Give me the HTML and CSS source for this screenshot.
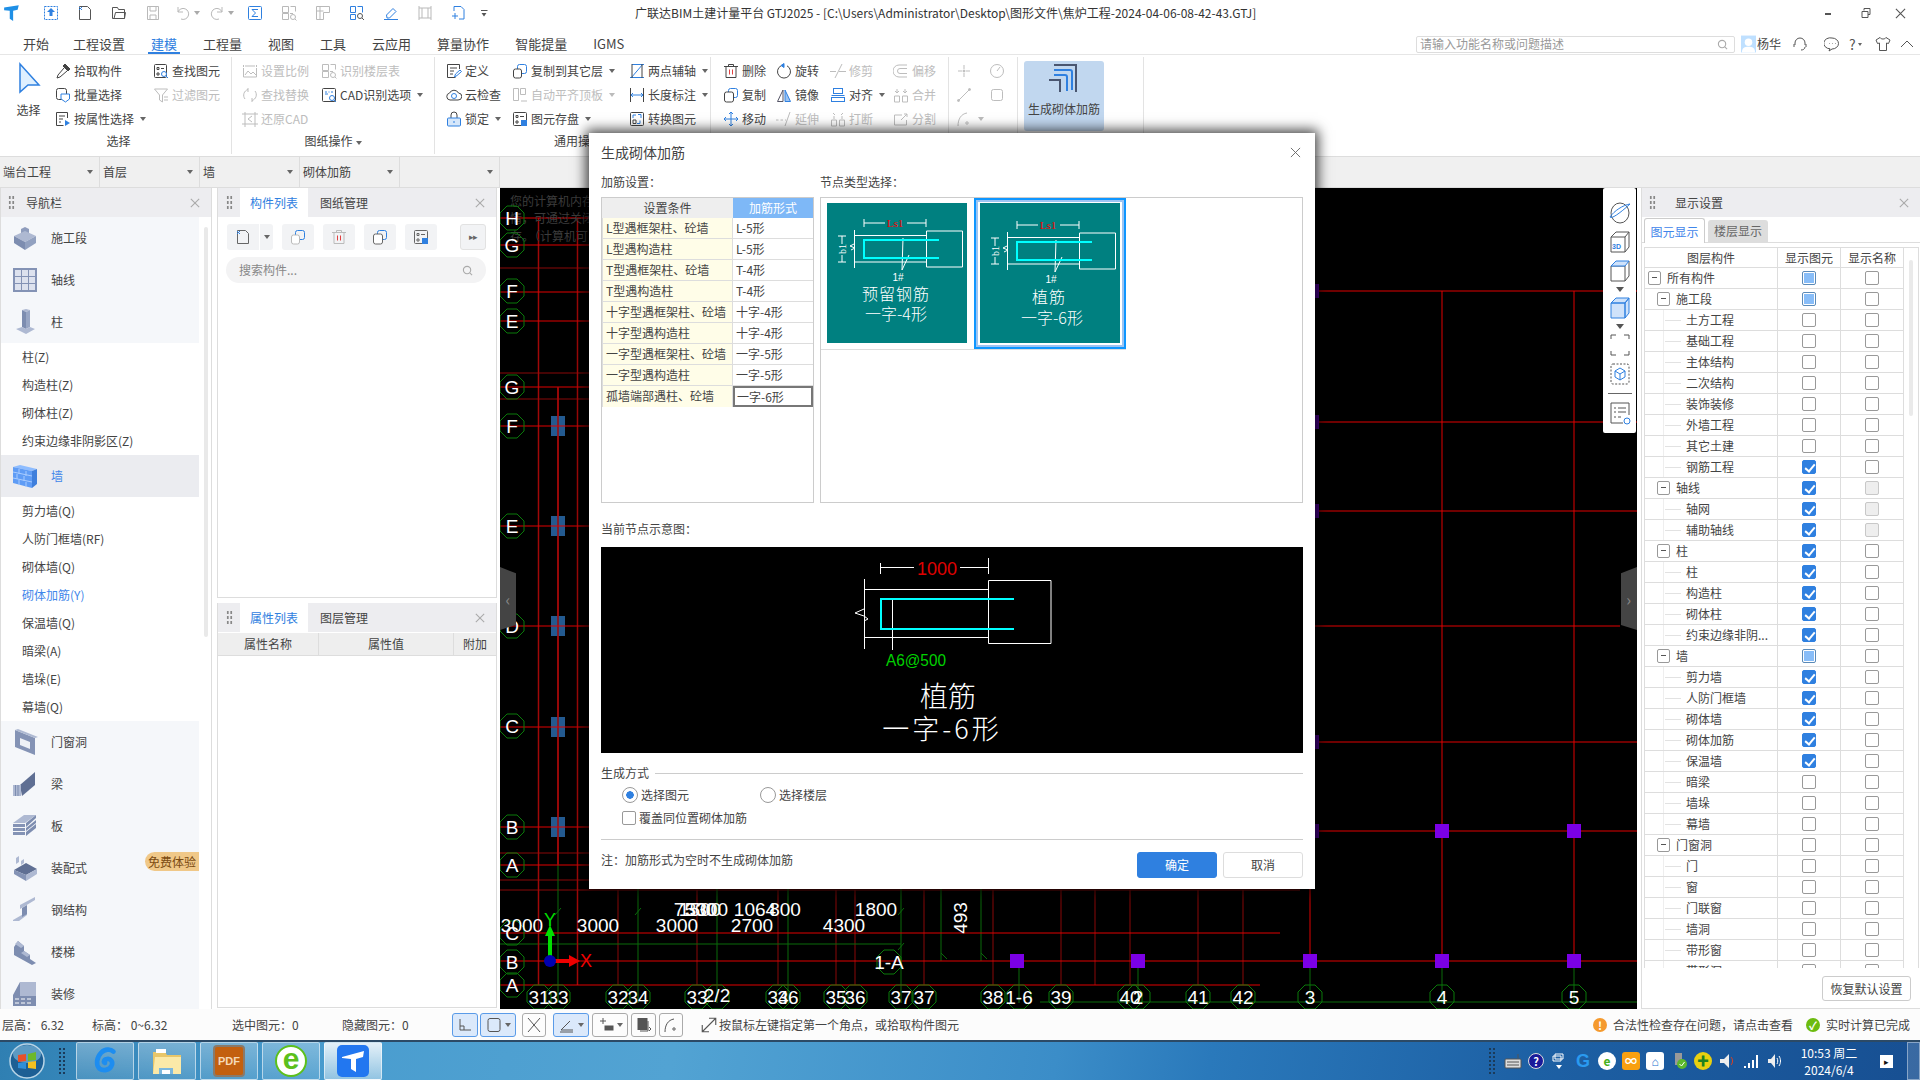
FILE: index.html
```html
<!DOCTYPE html>
<html lang="zh-CN">
<head>
<meta charset="utf-8">
<title>广联达BIM土建计量平台 GTJ2025</title>
<link rel="stylesheet" href="styles.css">
</head>
<body>
<svg class="defs" width="0" height="0">
<defs>
<symbol id="pick" viewBox="0 0 16 16"><path d="M10 1l5 5-2 2-5-5z" fill="#444"/><path d="M9 5l-6 7-1 3 3-1 7-6"/></symbol>
<symbol id="batch" viewBox="0 0 16 16"><rect x="1.5" y="1.5" width="10" height="11" rx="2"/><path stroke="#2f80e0" fill="#fff" d="M6 7h8.500v5l-4 3-4.500-3z"/></symbol>
<symbol id="attr" viewBox="0 0 16 16"><path d="M12.500 7V1.500h-11v13h7M4 5h6M4 8h4M4 11h2"/><path fill="#2f80e0" stroke="none" d="M10 9l5 3-5 3z"/></symbol>
<symbol id="find" viewBox="0 0 16 16"><rect x="1.500" y="1.500" width="12" height="13" rx="1"/><path d="M4 4.500h2v2H4zM8 5.500h3M4 10h2v2H4z"/><circle stroke="#2f80e0" fill="#fff" cx="11" cy="11" r="2.500"/><path stroke="#2f80e0" d="M13 13l2 2"/></symbol>
<symbol id="filter" viewBox="0 0 16 16"><path d="M1.500 2h13l-5 6v7l-3-2V8zM11 10h4M11 13h4"/></symbol>
<symbol id="scale" viewBox="0 0 16 16"><path d="M1.500 5v9h13V5M1.500 2v2M14.500 2v2M3 3h10M3 12l3-4 3 3 2-2 3 3"/></symbol>
<symbol id="floor" viewBox="0 0 16 16"><path d="M1.500 1.500h6v6h-6zM1.500 8.500h6v6h-6zM9 8.500h3M9.500 1.500h5v5"/><circle cx="12" cy="12" r="2.500"/><path d="M14 14l1.500 1.500"/></symbol>
<symbol id="replace" viewBox="0 0 16 16"><path d="M3 12A6 6 0 0 1 6 2.500M13 4a6 6 0 0 1-3 9.500M6 1v4M10 11v4"/></symbol>
<symbol id="cad" viewBox="0 0 16 16"><rect x="1.500" y="1.500" width="13" height="13" rx="1"/><path stroke="#2f80e0" d="M4 5h2M7.500 5h1M10 5h2M4 7h3"/><circle stroke="#2f80e0" fill="#fff" cx="11" cy="11" r="2.500"/><path stroke="#2f80e0" d="M13 13l2 2"/></symbol>
<symbol id="restore" viewBox="0 0 16 16"><path d="M3 1v15M13 1v15M0 3h16M0 13h16M10 5L6 8l4 3"/></symbol>
<symbol id="def" viewBox="0 0 16 16"><path d="M13.500 6V1.500h-12v13h8M4 5h7M4 8h4M4 11h3"/><path stroke="#2f80e0" d="M8.500 14l1-3 4.500-4 1.500 1.500-4.500 4z"/></symbol>
<symbol id="cloud" viewBox="0 0 16 16"><path d="M4 13a3.500 3.500 0 0 1-.5-6.900A5 5 0 0 1 12.500 6 3.500 3.500 0 0 1 12 13z"/><circle stroke="#2f80e0" cx="8" cy="9" r="2.500"/></symbol>
<symbol id="lock" viewBox="0 0 16 16"><path d="M5 7V4a3 3 0 0 1 6 0v3"/><rect stroke="#2f80e0" fill="#d6e7fa" x="1.500" y="7" width="13" height="8" rx="1"/><path stroke="#2f80e0" d="M8 10v2"/></symbol>
<symbol id="copyl" viewBox="0 0 16 16"><rect stroke="#2f80e0" x="5.500" y="1.500" width="9" height="9" rx="2"/><rect fill="#fff" x="1.500" y="6" width="8" height="9" rx="2"/></symbol>
<symbol id="atop" viewBox="0 0 16 16"><path d="M1.500 1.500h5v12h-5zM8.500 1.500h5v6h-5zM9 14h6"/></symbol>
<symbol id="save" viewBox="0 0 16 16"><rect x="1.500" y="1.500" width="13" height="13" rx="1"/><path d="M4 4.500h2v2H4zM8 5.500h4M4 10h2v2H4z"/><rect stroke="none" fill="#2f80e0" x="9" y="9" width="6" height="6"/></symbol>
<symbol id="two" viewBox="0 0 16 16"><path stroke="#2f80e0" d="M1 14.500h14M3 1.500h12M2 15L14 1"/><path d="M3 1v14M13 1v14"/></symbol>
<symbol id="len" viewBox="0 0 16 16"><path d="M1.500 1v14M14.500 1v14"/><path stroke="#2f80e0" d="M2 8h12M4 6L2 8l2 2M12 6l2 2-2 2"/></symbol>
<symbol id="conv" viewBox="0 0 16 16"><rect x="1.500" y="1.500" width="13" height="13" rx="1"/><path d="M4 9h3v3.500H4z"/><path stroke="#2f80e0" d="M9 3.500h3V7M11 9.500v3H8M4 7V4h3"/></symbol>
<symbol id="del" viewBox="0 0 16 16"><path d="M1 3.500h14M5.500 3V1.500h5V3M3 3.500v11h10v-11"/><path stroke="#e04040" d="M6.500 6.500v5M9.500 6.500v5"/></symbol>
<symbol id="rot" viewBox="0 0 16 16"><path d="M5 2.800a6.500 6.500 0 1 0 6 0"/><path fill="#2f80e0" stroke="#2f80e0" d="M8 .5l-3 2 3 2z"/></symbol>
<symbol id="trim" viewBox="0 0 16 16"><path d="M0 8.500h6M9 8.500h7M12 1L5 15"/></symbol>
<symbol id="off" viewBox="0 0 16 16"><path d="M14 2H6a5 5 0 0 0 0 12h8M14 5.500H7a2.500 2.500 0 0 0 0 5h7"/></symbol>
<symbol id="dup" viewBox="0 0 16 16"><rect stroke="#2f80e0" x="5.500" y="1.500" width="9" height="9" rx="2"/><rect fill="#fff" x="1.500" y="5" width="9" height="10" rx="2"/></symbol>
<symbol id="mir" viewBox="0 0 16 16"><path d="M7 3L1.500 14.500H7z" stroke="#556"/><path d="M9 3l5.500 11.500H9z" fill="#9cc4f2" stroke="#2f80e0"/></symbol>
<symbol id="ali" viewBox="0 0 16 16"><path stroke="#2f80e0" d="M1.500 8.500h13"/><rect stroke="#2f80e0" x="3.500" y="1.500" width="9" height="5"/><rect stroke="#2f80e0" x="1.500" y="10.500" width="13" height="4"/></symbol>
<symbol id="mer" viewBox="0 0 16 16"><path d="M1.500 9h5v6h-5zM9.500 9h5v6h-5zM4 2v4M12 2v4M2 4l2 2 2-2M10 4l2 2 2-2"/></symbol>
<symbol id="mov" viewBox="0 0 16 16"><path stroke="#2f80e0" d="M8 1v14M1 8h14M6 3l2-2 2 2M6 13l2 2 2-2M3 6L1 8l2 2M13 6l2 2-2 2"/></symbol>
<symbol id="ext" viewBox="0 0 16 16"><path d="M0 9h2.500M4.500 9H7M9 9h1M14 1L9 15"/></symbol>
<symbol id="brk" viewBox="0 0 16 16"><path d="M1.500 9h5v6h-5zM9.500 9h5v6h-5zM4 5v3M12 5v3M3 2l2 2M13 2l-2 2"/></symbol>
<symbol id="spl" viewBox="0 0 16 16"><path d="M9 4H1.500v10h12V9M8 9l6-6M11 3h3v3"/></symbol>
<symbol id="pt" viewBox="0 0 16 16"><path d="M8 2v4M8 10v4M2 8h4M10 8h4"/><circle fill="currentColor" cx="8" cy="8" r="1"/></symbol>
<symbol id="gauge" viewBox="0 0 16 16"><circle cx="8" cy="8" r="6.500"/><path d="M8 8l3-4"/></symbol>
<symbol id="slash" viewBox="0 0 16 16"><path d="M2 14L14 2"/><circle fill="currentColor" cx="2.500" cy="13.500" r="1"/><circle fill="currentColor" cx="13.500" cy="2.500" r="1"/></symbol>
<symbol id="rr" viewBox="0 0 16 16"><rect x="2.500" y="2.500" width="11" height="11" rx="2"/></symbol>
<symbol id="curve" viewBox="0 0 16 16"><path d="M2 15C2 8 5 3 11 2"/><circle cx="11" cy="12" r="1.200"/></symbol>
<symbol id="xmark" viewBox="0 0 12 12"><path d="M1 1l10 10M11 1L1 11"/></symbol>
<symbol id="mag" viewBox="0 0 12 12"><circle cx="5.500" cy="5.500" r="4"/><path d="M8.500 8.500l2.500 2.500"/></symbol>
<symbol id="cb1" viewBox="0 0 16 16"><path d="M2.500 14.500V1.500h8l3 3v10z"/><path stroke="#2f80e0" d="M2 2l3 3M5 2L2 5"/></symbol>
<polygon id="hx" points="-5,-12 5,-12 12,-5 12,5 5,12 -5,12 -12,5 -12,-5"/>
<symbol id="node" viewBox="0 0 140 140">
<path fill="none" stroke="#fff" d="M37 16v8M99 16v8M37 20h21M80 20h19M27.500 27v38M27.500 32.500H99M27.500 59H99M99.500 28h36v36h-36zM11 33h8M11 59h8M15 33v8M15 52v7M27 41l-4 2 5 2-4 2M76 35l-1 32M82 52l-7 15"/>
<path fill="none" stroke="#00ffff" stroke-width="2" d="M112 37H37v18h75"/>
<text class="ls" x="68" y="24">Ls1</text><text class="b1" transform="translate(19 46) rotate(-90)">b1</text><text class="no" x="71" y="78">1#</text>
</symbol>
</defs>
</svg>

<div class="app">
<header class="titlebar">
<svg class="tlogo" viewBox="0 0 16 16"><path fill="#1e8fe6" d="M1 3l13-2-1 4-4 1v9l-3-2V6l-5-.5z"/></svg>
<span class="ti blue"><svg class="ic" viewBox="0 0 16 16"><path stroke-dasharray="2 1" stroke="#2f80e0" d="M1.500 1.500h13v13h-13z"/><path fill="#2f80e0" stroke="none" d="M8 3l4 4H9.500v4h-3V7H4z"/></svg></span>
<span class="ti"><svg class="ic"><use href="#cb1"/></svg></span>
<span class="ti"><svg class="ic" viewBox="0 0 16 16"><path d="M1.500 13.500v-11h5l1 2h6v9zM3 13.500l1.500-6h10l-1 6"/></svg></span>
<span class="ti off"><svg class="ic" viewBox="0 0 16 16"><path d="M2.500 1.500h11v13h-11zM5 2v4h6V2M5 14v-4h6v4"/></svg></span>
<span class="ti off"><svg class="ic" viewBox="0 0 16 16"><path d="M3 7a5.500 5.500 0 1 1 3 7M3 2v5h5"/></svg><i class="car"></i></span>
<span class="ti off"><svg class="ic" viewBox="0 0 16 16"><path d="M13 7a5.500 5.500 0 1 0-3 7M13 2v5H8"/></svg><i class="car"></i></span>
<span class="ti blue"><svg class="ic" viewBox="0 0 16 16"><rect x="1.500" y="1.500" width="13" height="13" rx="1"/><path d="M11 4.500H5l3.500 3.500L5 11.500h6"/></svg></span>
<span class="ti off"><svg class="ic"><use href="#floor"/></svg></span>
<span class="ti off"><svg class="ic" viewBox="0 0 16 16"><path d="M1.500 1.500h13v6h-6v7h-7zM1.500 6h7M5 1.500v13"/></svg></span>
<span class="ti"><svg class="ic" viewBox="0 0 16 16"><path stroke="#2f80e0" d="M1.500 1.500h5v6h-5zM8.500 1.500h5v6M1.500 9.500h5v5h-5z"/><circle cx="11" cy="11" r="2.500"/><path d="M13 13l2 2"/></svg></span>
<span class="ti blue"><svg class="ic" viewBox="0 0 16 16"><path d="M1 14.500h14M4 13l-.5-3L10 3.500l3 3L6.500 13z"/></svg></span>
<span class="ti off"><svg class="ic" viewBox="0 0 16 16"><path d="M2 1v14M14 1v14M2 3h12M2 13h12M5 3v10M11 3v10"/></svg></span>
<span class="ti blue"><svg class="ic" viewBox="0 0 16 16"><path d="M3 6V1.500h7l3 3V14H8M1 11h6M4 8v6"/></svg></span>
<span class="ti menu-more"><i class="more"></i></span>
<span class="wintitle">广联达BIM土建计量平台 GTJ2025 - [C:\Users\Administrator\Desktop\图形文件\焦炉工程-2024-04-06-08-42-43.GTJ]</span>
<span class="winbtns">
<i class="wmin"></i>
<svg class="wr" viewBox="0 0 10 10"><path d="M3 2.500V.5h6v6H7M1 3.500h6v6H1z"/></svg>
<svg class="wx" viewBox="0 0 12 12"><use href="#xmark"/></svg>
</span>
</header>

<nav class="menubar">
<span class="mi">开始</span><span class="mi">工程设置</span><span class="mi on">建模</span><span class="mi">工程量</span><span class="mi">视图</span><span class="mi">工具</span><span class="mi">云应用</span><span class="mi">算量协作</span><span class="mi">智能提量</span><span class="mi">IGMS</span>
<div class="msearch"><span>请输入功能名称或问题描述</span><svg class="sm" viewBox="0 0 12 12"><use href="#mag"/></svg></div>
<svg class="avatar" viewBox="0 0 16 18"><rect width="16" height="18" fill="#bfe0ff"/><circle cx="8" cy="7" r="4" fill="#fff"/><path d="M1 18c0-5 3-6 7-6s7 1 7 6z" fill="#fff"/></svg>
<span class="uname">杨华</span>
<svg class="hi hs" viewBox="0 0 16 16"><path d="M3 9V7a5 5 0 0 1 10 0v2M2 8v3M14 8v3M13 11c0 2-2 3-4 3"/></svg>
<svg class="hi hc" viewBox="0 0 16 16"><path d="M8 2a6.500 5.500 0 1 0-2 10.800L5 15l3-2a6.500 5.500 0 0 0 0-11zM5 7.500h.5M8 7.500h.5M11 7.500h.5"/></svg>
<span class="hq">?<i class="car"></i></span>
<svg class="hi ht" viewBox="0 0 16 16"><path d="M5 1.500L1 4l1.500 3.500L4.500 7v7.500h7V7l2 .5L15 4l-4-2.500C10 3.500 6 3.500 5 1.500z"/></svg>
<svg class="hi hu" viewBox="0 0 16 16"><path d="M2 11l6-6 6 6"/></svg>
</nav>

<section class="ribbon">
<div class="grp g1"><div class="gb">
 <div class="bigsel"><svg viewBox="0 0 24 32" class="bigarrow"><path d="M3 2l19 21H11l-8 7z" fill="#dff0ff" stroke="#2f80e0" stroke-width="1.500"/></svg><span>选择</span></div>
 <div class="col w98"><div class="it"><svg class="ic"><use href="#pick"/></svg>拾取构件</div><div class="it"><svg class="ic"><use href="#batch"/></svg>批量选择</div><div class="it"><svg class="ic"><use href="#attr"/></svg>按属性选择<i class="car"></i></div></div>
 <div class="col"><div class="it"><svg class="ic"><use href="#find"/></svg>查找图元</div><div class="it off"><svg class="ic"><use href="#filter"/></svg>过滤图元</div></div>
 </div><div class="gl gl1">选择</div></div>
<div class="grp g2"><div class="gb">
 <div class="col w79"><div class="it off"><svg class="ic"><use href="#scale"/></svg>设置比例</div><div class="it off"><svg class="ic"><use href="#replace"/></svg>查找替换</div><div class="it off"><svg class="ic"><use href="#restore"/></svg>还原CAD</div></div>
 <div class="col"><div class="it off"><svg class="ic"><use href="#floor"/></svg>识别楼层表</div><div class="it"><svg class="ic"><use href="#cad"/></svg>CAD识别选项<i class="car"></i></div></div>
 </div><div class="gl gl2">图纸操作<i class="car"></i></div></div>
<div class="grp g3"><div class="gb">
 <div class="col w66"><div class="it"><svg class="ic"><use href="#def"/></svg>定义</div><div class="it"><svg class="ic"><use href="#cloud"/></svg>云检查</div><div class="it"><svg class="ic"><use href="#lock"/></svg>锁定<i class="car"></i></div></div>
 <div class="col w117"><div class="it"><svg class="ic"><use href="#copyl"/></svg>复制到其它层<i class="car"></i></div><div class="it off"><svg class="ic"><use href="#atop"/></svg>自动平齐顶板<i class="car"></i></div><div class="it"><svg class="ic"><use href="#save"/></svg>图元存盘<i class="car"></i></div></div>
 <div class="col"><div class="it"><svg class="ic"><use href="#two"/></svg>两点辅轴<i class="car"></i></div><div class="it"><svg class="ic"><use href="#len"/></svg>长度标注<i class="car"></i></div><div class="it"><svg class="ic"><use href="#conv"/></svg>转换图元</div></div>
 </div><div class="gl">通用操作</div></div>
<div class="grp g4"><div class="gb">
 <div class="col w53"><div class="it"><svg class="ic"><use href="#del"/></svg>删除</div><div class="it"><svg class="ic"><use href="#dup"/></svg>复制</div><div class="it"><svg class="ic"><use href="#mov"/></svg>移动</div></div>
 <div class="col w54"><div class="it"><svg class="ic"><use href="#rot"/></svg>旋转</div><div class="it"><svg class="ic"><use href="#mir"/></svg>镜像</div><div class="it off"><svg class="ic"><use href="#ext"/></svg>延伸</div></div>
 <div class="col w63"><div class="it off"><svg class="ic"><use href="#trim"/></svg>修剪</div><div class="it"><svg class="ic"><use href="#ali"/></svg>对齐<i class="car"></i></div><div class="it off"><svg class="ic"><use href="#brk"/></svg>打断</div></div>
 <div class="col"><div class="it off"><svg class="ic"><use href="#off"/></svg>偏移</div><div class="it off"><svg class="ic"><use href="#mer"/></svg>合并</div><div class="it off"><svg class="ic"><use href="#spl"/></svg>分割</div></div>
 </div></div>
<div class="grp g5"><div class="gb">
 <div class="col w33"><div class="it off"><svg class="ic"><use href="#pt"/></svg></div><div class="it off"><svg class="ic"><use href="#slash"/></svg></div><div class="it off"><svg class="ic"><use href="#curve"/></svg><i class="car"></i></div></div>
 <div class="col"><div class="it off"><svg class="ic"><use href="#gauge"/></svg></div><div class="it off"><svg class="ic"><use href="#rr"/></svg></div></div>
 </div></div>
<div class="grp g6"><div class="genbtn">
 <svg class="genic" viewBox="0 0 32 32"><path d="M6 3h22v27" fill="none" stroke="#4a5670" stroke-width="2"/><path d="M6 8h16a2 2 0 0 1 2 2v18M6 13h11a2 2 0 0 1 2 2v14" fill="none" stroke="#2f80e0" stroke-width="2"/><path d="M1 18h11v12" fill="none" stroke="#4a5670" stroke-width="2"/></svg>
 <span>生成砌体加筋</span></div></div>
</section>

<div class="dropbar">
<span class="dd">端台工程<i class="car"></i></span><span class="dd">首层<i class="car"></i></span><span class="dd">墙<i class="car"></i></span><span class="dd">砌体加筋<i class="car"></i></span><span class="dd"><i class="car"></i></span>
</div>

<main class="main">
<aside class="nav">
 <div class="phead"><i class="grip"></i><span class="ptitle">导航栏</span><svg class="pclose" viewBox="0 0 12 12"><use href="#xmark"/></svg></div>
 <div class="navbody">
  <div class="navlist">
   <div class="nb"><svg class="ni" viewBox="0 0 26 26"><path fill="#8f9dbd" d="M13 2l4 2v4l-4 2-4-2V4z"/><path fill="#aeb9d2" d="M2 11l11-5 11 5-11 6z"/><path fill="#7d8db0" d="M2 11v7l11 7v-8z"/><path fill="#92a1c0" d="M24 11v7l-11 7v-8z"/></svg>施工段</div>
   <div class="nb"><svg class="ni" viewBox="0 0 26 26"><rect x="1" y="1" width="24" height="24" fill="#8493b5"/><path d="M3 3h6v6H3zM10 3h6v6h-6zM17 3h6v6h-6zM3 10h6v6H3zM10 10h6v6h-6zM17 10h6v6h-6zM3 17h6v6H3zM10 17h6v6h-6zM17 17h6v6h-6z" fill="#dde2ee"/></svg>轴线</div>
   <div class="nb"><svg class="ni" viewBox="0 0 26 26"><path fill="#aeb9d2" d="M10 1l4-1 4 1-4 2z"/><path fill="#7d8db0" d="M10 1l4 2v17l-4-2z"/><path fill="#98a6c4" d="M18 1l-4 2v17l4-2z"/><path fill="#aeb9d2" d="M4 20l6-2 4 2 4-2 5 2-9 5z"/></svg>柱</div>
   <div class="ns">柱(Z)</div><div class="ns">构造柱(Z)</div><div class="ns">砌体柱(Z)</div><div class="ns">约束边缘非阴影区(Z)</div>
   <div class="nb cur"><svg class="ni" viewBox="0 0 26 26"><path fill="#8dbcff" d="M1 4l7-2 17 4-5 2z"/><path fill="#5f9cf5" d="M1 4l19 4v17L1 20z"/><path fill="#3f7fdc" d="M25 6v15l-5 4V8z"/><path stroke="#a9ccff" fill="none" d="M1 9l19 4M1 15l19 4M7 6v5M14 8v5M5 11v5M12 13v5M7 17v5M14 19v5"/></svg>墙</div>
   <div class="ns">剪力墙(Q)</div><div class="ns">人防门框墙(RF)</div><div class="ns">砌体墙(Q)</div><div class="ns act">砌体加筋(Y)</div><div class="ns">保温墙(Q)</div><div class="ns">暗梁(A)</div><div class="ns">墙垛(E)</div><div class="ns">幕墙(Q)</div>
   <div class="nb"><svg class="ni" viewBox="0 0 26 26"><path fill="#8493b5" d="M3 1l20 8v17L3 18z"/><path fill="#eef1f6" d="M8 9l10 4v7L8 16z"/><path fill="#aeb9d2" d="M3 1l3-1 20 8-3 1z"/></svg>门窗洞</div>
   <div class="nb"><svg class="ni" viewBox="0 0 26 26"><path fill="#5f6f93" d="M8 14L23 1v13L10 25z"/><path fill="#aeb9d2" d="M1 14h8v11H1z"/><path stroke="#7d8db0" d="M3.500 14v11M6 14v11"/></svg>梁</div>
   <div class="nb"><svg class="ni" viewBox="0 0 26 26"><path fill="#aeb9d2" d="M1 10L12 2h12L13 10z"/><path fill="#8493b5" d="M1 11h12v3H1zM1 15h12v3H1zM1 19h12v3H1z"/><path fill="#7d8db0" d="M14 10L24 2v3L14 14zM14 15l10-8v3l-10 8zM14 19l10-8v4l-10 8z"/></svg>板</div>
   <div class="nb"><svg class="ni" viewBox="0 0 26 26"><path fill="#aeb9d2" d="M4 3l3-2v6L4 9zM9 6l3-2v4L9 10z"/><path fill="#5f6f93" d="M2 15l12-7 11 6-11 6z"/><path fill="#8493b5" d="M2 15v4l12 7v-6z"/><path fill="#aeb9d2" d="M25 14v5l-11 7v-6z"/></svg>装配式</div>
   <div class="nb"><svg class="ni" viewBox="0 0 26 26"><path fill="#aeb9d2" d="M8 8L23 0v3L8 12zM1 23l14-8v3L7 24H1z"/><path fill="#7d8db0" d="M10 11l5-3v9l-5 3z"/></svg>钢结构</div>
   <div class="nb"><svg class="ni" viewBox="0 0 26 26"><path fill="#7d8db0" d="M2 8l4-6 6 5v5l6 4v4l6 4-4 2L2 16z"/><path fill="#aeb9d2" d="M6 2l6 5-3 2-6-4zM12 12l6 4-3 2-6-4z"/></svg>楼梯</div>
   <div class="nb"><svg class="ni" viewBox="0 0 26 26"><path fill="#aeb9d2" d="M8 1h16v14H8z"/><path fill="#7d8db0" d="M1 14l7-13v14H1zM1 15h23v10H1z"/><path stroke="#fff" d="M3 18h4M9 18h4M15 18h4M3 22h4M9 22h4M15 22h4"/></svg>装修</div>
  </div>
  <div class="navscroll"><i></i></div>
  <span class="badge">免费体验</span>
 </div>
</aside>

<div class="midcol">
 <section class="pane pa">
  <div class="phead"><i class="grip"></i><span class="ptab on">构件列表</span><span class="ptab">图纸管理</span><svg class="pclose" viewBox="0 0 12 12"><use href="#xmark"/></svg></div>
  <div class="tools">
   <span class="tb tb1"><svg class="ic"><use href="#cb1"/></svg></span><span class="tb tbc"><i class="car"></i></span>
   <span class="tb mg9 off"><svg class="ic"><use href="#copyl"/></svg></span>
   <span class="tb mg9 off"><svg class="ic"><use href="#del"/></svg></span>
   <span class="tb mg9"><svg class="ic"><use href="#dup"/></svg></span>
   <span class="tb mg9"><svg class="ic"><use href="#save"/></svg></span>
   <span class="tb tbr">▸▸</span>
  </div>
  <div class="psearch"><span>搜索构件...</span><svg class="sm" viewBox="0 0 12 12"><use href="#mag"/></svg></div>
 </section>
 <section class="pane pb">
  <div class="phead"><i class="grip"></i><span class="ptab on">属性列表</span><span class="ptab">图层管理</span><svg class="pclose" viewBox="0 0 12 12"><use href="#xmark"/></svg></div>
  <div class="ptable"><span class="c1">属性名称</span><span class="c2">属性值</span><span class="c3">附加</span></div>
 </section>
</div>

<div class="canvas">
<svg class="cad" viewBox="500 188 1137 821" xmlns="http://www.w3.org/2000/svg">
<g class="dimr">
<path d="M500 268H589M500 373H589M500 399H589M500 853H589M500 880H589M500 890H1300M618 890V985M697 890V985M778 890V985M836 890V985M855 890V985M924 890V985M993 890V985M1061 890V985M1095 890V985M1130 890V985M1198 890V985M1243 890V985"/>
</g>
<g class="grn">
<path d="M558 865V1003M638 889V1003M717 889V1003M788 889V1003M901 889V1003M941 889V961M981 889V961M1019 961V1003M1138 961V1003M500 944H901M1040 1002H1637M1310 961V1003M1442 961V1003M1574 961V1003M555 915l6-7M635 915l6-7M898 915l6-7M898 950l6-7M941 953l6 6M981 953l6 6"/>
</g>
<g class="vred"><path d="M538.500 218V985M558 387V865M577.500 218V985"/></g>
<g class="red">
<path d="M500 218H589M500 245H589M500 292H589M500 321H589M500 387H589M500 426H589M500 526H589M500 626H589M500 727H589M500 827H589M500 865H589M500 933H1280M500 961H1637M500 985H1260"/>
<path d="M1315 291H1637M1315 422H1637M1315 511H1637M1315 626H1620M1315 742H1637M1315 831H1637M1442 291V961M1574 291V961M1310 889V961"/>
</g>
<g fill="#235a90"><rect x="551" y="416" width="14" height="20"/><rect x="551" y="516" width="14" height="20"/><rect x="551" y="616" width="14" height="20"/><rect x="551" y="717" width="14" height="20"/><rect x="551" y="817" width="14" height="20"/></g>
<path class="vred" d="M558 387V865"/>
<path class="lnr" d="M551 426h14M551 526h14M551 626h14M551 727h14M551 827h14"/>
<g fill="#7b00e6"><rect x="1435" y="824" width="14" height="14"/><rect x="1567" y="824" width="14" height="14"/><rect x="1303" y="954" width="14" height="14"/><rect x="1435" y="954" width="14" height="14"/><rect x="1567" y="954" width="14" height="14"/><rect x="1010" y="954" width="14" height="14"/><rect x="1131" y="954" width="14" height="14"/></g>
<g fill="#470088"><rect x="1315" y="284" width="4" height="14"/><rect x="1315" y="415" width="4" height="14"/><rect x="1315" y="504" width="4" height="14"/><rect x="1315" y="735" width="4" height="14"/><rect x="1315" y="824" width="4" height="14"/></g>
<g class="hint"><text x="510" y="206">您的计算机内存</text><text x="510" y="223">情，可通过关闭</text><text x="510" y="241">存。（计算机可</text></g>
<g class="bub">
<use href="#hx" x="512" y="218"/><use href="#hx" x="512" y="245"/><use href="#hx" x="512" y="291"/><use href="#hx" x="512" y="321"/><use href="#hx" x="512" y="387"/><use href="#hx" x="512" y="426"/><use href="#hx" x="512" y="526"/><use href="#hx" x="512" y="626"/><use href="#hx" x="512" y="726"/><use href="#hx" x="512" y="827"/><use href="#hx" x="512" y="865"/><use href="#hx" x="512" y="933"/><use href="#hx" x="512" y="962"/><use href="#hx" x="512" y="985"/>
<use href="#hx" x="539" y="997"/><use href="#hx" x="558" y="997"/><use href="#hx" x="618" y="997"/><use href="#hx" x="638" y="997"/><use href="#hx" x="697" y="997"/><use href="#hx" x="717" y="997"/><use href="#hx" x="778" y="997"/><use href="#hx" x="788" y="997"/><use href="#hx" x="836" y="997"/><use href="#hx" x="855" y="997"/><use href="#hx" x="901" y="997"/><use href="#hx" x="924" y="997"/><use href="#hx" x="993" y="997"/><use href="#hx" x="1019" y="997"/><use href="#hx" x="1061" y="997"/><use href="#hx" x="1130" y="997"/><use href="#hx" x="1138" y="997"/><use href="#hx" x="1198" y="997"/><use href="#hx" x="1243" y="997"/><use href="#hx" x="1310" y="997"/><use href="#hx" x="1442" y="997"/><use href="#hx" x="1574" y="997"/><use href="#hx" x="889" y="962"/>
</g>
<g class="bt">
<text x="512" y="225">H</text><text x="512" y="252">G</text><text x="512" y="298">F</text><text x="512" y="328">E</text><text x="512" y="394">G</text><text x="512" y="433">F</text><text x="512" y="533">E</text><text x="512" y="633">D</text><text x="512" y="733">C</text><text x="512" y="834">B</text><text x="512" y="872">A</text><text x="512" y="940">C</text><text x="512" y="969">B</text><text x="512" y="992">A</text>
<text x="539" y="1004">31</text><text x="558" y="1004">33</text><text x="618" y="1004">32</text><text x="638" y="1004">34</text><text x="697" y="1004">33</text><text x="717" y="1002">2/2</text><text x="778" y="1004">34</text><text x="788" y="1004">36</text><text x="836" y="1004">35</text><text x="855" y="1004">36</text><text x="901" y="1004">37</text><text x="924" y="1004">37</text><text x="993" y="1004">38</text><text x="1019" y="1004">1-6</text><text x="1061" y="1004">39</text><text x="1130" y="1004">40</text><text x="1138" y="1004">2</text><text x="1198" y="1004">41</text><text x="1243" y="1004">42</text><text x="1310" y="1004">3</text><text x="1442" y="1004">4</text><text x="1574" y="1004">5</text><text x="889" y="969">1-A</text>
<text x="522" y="932">3000</text><text x="598" y="932">3000</text><text x="677" y="932">3000</text><text x="752" y="932">2700</text><text x="844" y="932">4300</text><text x="876" y="916">1800</text><text x="695" y="916">7500</text><text x="700" y="916">1500</text><text x="707" y="916">3300</text><text x="755" y="916">1064</text><text x="785" y="916">800</text>
<text transform="translate(967 918) rotate(-90)">493</text>
</g>
<path d="M550 961V935" stroke="#00e000" stroke-width="4"/><path d="M550 925l-5 11h10z" fill="#00e000"/><path d="M550 961h22" stroke="#f00000" stroke-width="4"/><path d="M580 961l-11-6v12z" fill="#f00000"/><circle cx="550" cy="961" r="6" fill="#0000b0"/>
<text class="ax" x="586" y="967" fill="#f00000">X</text><text class="ax" x="550" y="926" fill="#00e000">Y</text>
</svg>
<div class="handle hl"><span>‹</span></div>
<div class="handle hr"><span>›</span></div>
<div class="vstrip">
<svg class="vi" viewBox="0 0 22 24"><ellipse cx="11" cy="12" rx="9" ry="10"/><path stroke="#2f80e0" d="M1 16C5 10 14 4 21 3M1 16c1 2 8-2 20-13"/></svg>
<svg class="vi" viewBox="0 0 22 24"><path d="M2 7h14v15H2zM2 7l5-5h13v15l-4 5M16 7l4-5"/><text class="v3d" x="3" y="19">3D</text></svg>
<svg class="vi" viewBox="0 0 22 24"><path d="M2 7h14v15H2zM16 22l4-5V2"/><path fill="#cfe2fa" stroke="#2f80e0" d="M2 7l5-5h13l-4 5z"/></svg>
<i class="vcar"></i>
<svg class="vi" viewBox="0 0 22 24"><path fill="#cfe2fa" stroke="#2f80e0" d="M2 7h14v15H2zM2 7l5-5h13l-4 5zM16 7l4-5v15l-4 5z"/></svg>
<i class="vcar"></i>
<svg class="vi" viewBox="0 0 22 24"><path d="M2 6V2h5M15 2h5v4M2 18v4h5M15 22h5v-4"/></svg>
<svg class="vi" viewBox="0 0 22 24"><rect x="2" y="2" width="18" height="20" rx="2" stroke-dasharray="2 1.500"/><path stroke="#2f80e0" d="M11 6l5 3v6l-5 3-5-3V9zM6 9l5 3 5-3M11 12v6"/></svg>
<i class="vsep"></i>
<svg class="vi" viewBox="0 0 22 24"><path d="M20 14V2H2v20h12M5 7h2M9 7h8M5 11h2M9 11h8M5 16h2M9 16h3"/><circle cx="18" cy="20" r="3" stroke="#2f80e0"/></svg>
</div>
</div>

<aside class="right">
 <div class="phead"><i class="grip"></i><span class="ptitle rt">显示设置</span><svg class="pclose" viewBox="0 0 12 12"><use href="#xmark"/></svg></div>
 <div class="rtabs"><span class="rtab on">图元显示</span><span class="rtab">楼层显示</span></div>
 <div class="tree">
  <div class="tr th"><span>图层构件</span><span>显示图元</span><span>显示名称</span></div>
  <div class="tr"><span class="n l0"><b class="tg"></b>所有构件</span><span class="k"><i class="cb part"></i></span><span class="k"><i class="cb"></i></span></div>
  <div class="tr"><span class="n l1"><b class="tg"></b>施工段</span><span class="k"><i class="cb part"></i></span><span class="k"><i class="cb"></i></span></div>
  <div class="tr"><span class="n l2">土方工程</span><span class="k"><i class="cb"></i></span><span class="k"><i class="cb"></i></span></div>
  <div class="tr"><span class="n l2">基础工程</span><span class="k"><i class="cb"></i></span><span class="k"><i class="cb"></i></span></div>
  <div class="tr"><span class="n l2">主体结构</span><span class="k"><i class="cb"></i></span><span class="k"><i class="cb"></i></span></div>
  <div class="tr"><span class="n l2">二次结构</span><span class="k"><i class="cb"></i></span><span class="k"><i class="cb"></i></span></div>
  <div class="tr"><span class="n l2">装饰装修</span><span class="k"><i class="cb"></i></span><span class="k"><i class="cb"></i></span></div>
  <div class="tr"><span class="n l2">外墙工程</span><span class="k"><i class="cb"></i></span><span class="k"><i class="cb"></i></span></div>
  <div class="tr"><span class="n l2">其它土建</span><span class="k"><i class="cb"></i></span><span class="k"><i class="cb"></i></span></div>
  <div class="tr"><span class="n l2">钢筋工程</span><span class="k"><i class="cb on"></i></span><span class="k"><i class="cb"></i></span></div>
  <div class="tr"><span class="n l1"><b class="tg"></b>轴线</span><span class="k"><i class="cb on"></i></span><span class="k"><i class="cb dis"></i></span></div>
  <div class="tr"><span class="n l2">轴网</span><span class="k"><i class="cb on"></i></span><span class="k"><i class="cb dis"></i></span></div>
  <div class="tr"><span class="n l2">辅助轴线</span><span class="k"><i class="cb on"></i></span><span class="k"><i class="cb dis"></i></span></div>
  <div class="tr"><span class="n l1"><b class="tg"></b>柱</span><span class="k"><i class="cb on"></i></span><span class="k"><i class="cb"></i></span></div>
  <div class="tr"><span class="n l2">柱</span><span class="k"><i class="cb on"></i></span><span class="k"><i class="cb"></i></span></div>
  <div class="tr"><span class="n l2">构造柱</span><span class="k"><i class="cb on"></i></span><span class="k"><i class="cb"></i></span></div>
  <div class="tr"><span class="n l2">砌体柱</span><span class="k"><i class="cb on"></i></span><span class="k"><i class="cb"></i></span></div>
  <div class="tr"><span class="n l2">约束边缘非阴...</span><span class="k"><i class="cb on"></i></span><span class="k"><i class="cb"></i></span></div>
  <div class="tr"><span class="n l1"><b class="tg"></b>墙</span><span class="k"><i class="cb part"></i></span><span class="k"><i class="cb"></i></span></div>
  <div class="tr"><span class="n l2">剪力墙</span><span class="k"><i class="cb on"></i></span><span class="k"><i class="cb"></i></span></div>
  <div class="tr"><span class="n l2">人防门框墙</span><span class="k"><i class="cb on"></i></span><span class="k"><i class="cb"></i></span></div>
  <div class="tr"><span class="n l2">砌体墙</span><span class="k"><i class="cb on"></i></span><span class="k"><i class="cb"></i></span></div>
  <div class="tr"><span class="n l2">砌体加筋</span><span class="k"><i class="cb on"></i></span><span class="k"><i class="cb"></i></span></div>
  <div class="tr"><span class="n l2">保温墙</span><span class="k"><i class="cb on"></i></span><span class="k"><i class="cb"></i></span></div>
  <div class="tr"><span class="n l2">暗梁</span><span class="k"><i class="cb"></i></span><span class="k"><i class="cb"></i></span></div>
  <div class="tr"><span class="n l2">墙垛</span><span class="k"><i class="cb"></i></span><span class="k"><i class="cb"></i></span></div>
  <div class="tr"><span class="n l2">幕墙</span><span class="k"><i class="cb"></i></span><span class="k"><i class="cb"></i></span></div>
  <div class="tr"><span class="n l1"><b class="tg"></b>门窗洞</span><span class="k"><i class="cb"></i></span><span class="k"><i class="cb"></i></span></div>
  <div class="tr"><span class="n l2">门</span><span class="k"><i class="cb"></i></span><span class="k"><i class="cb"></i></span></div>
  <div class="tr"><span class="n l2">窗</span><span class="k"><i class="cb"></i></span><span class="k"><i class="cb"></i></span></div>
  <div class="tr"><span class="n l2">门联窗</span><span class="k"><i class="cb"></i></span><span class="k"><i class="cb"></i></span></div>
  <div class="tr"><span class="n l2">墙洞</span><span class="k"><i class="cb"></i></span><span class="k"><i class="cb"></i></span></div>
  <div class="tr"><span class="n l2">带形窗</span><span class="k"><i class="cb"></i></span><span class="k"><i class="cb"></i></span></div>
  <div class="tr"><span class="n l2">带形洞</span><span class="k"><i class="cb"></i></span><span class="k"><i class="cb"></i></span></div>
  <i class="treescroll"></i>
 </div>
 <div class="rfoot"><span class="resetbtn">恢复默认设置</span></div>
</aside>
</main>

<footer class="status">
<span class="s1">层高： 6.32</span><span class="s2">标高： 0~6.32</span><span class="s3">选中图元：0</span><span class="s4">隐藏图元：0</span>
<span class="sb sel w26"><svg class="ic" viewBox="0 0 16 16"><path d="M3 2v11h11M3 9h4v4"/></svg></span>
<span class="sb sel w36"><svg class="ic" viewBox="0 0 16 16"><rect x="2" y="1.500" width="12" height="13" rx="2"/></svg><i class="car"></i></span>
<span class="sb w24 m6"><svg class="ic" viewBox="0 0 16 16"><path d="M2 1l12 14M14 1L2 15"/></svg></span>
<span class="sb sel w36 m7"><svg class="ic" viewBox="0 0 16 16"><path d="M2 13L11 4M2 13h12M1 15h13"/></svg><i class="car"></i></span>
<span class="sb w36 m3"><svg class="ic" viewBox="0 0 16 16"><path d="M5 1v6M2 4h6"/><rect x="7" y="9" width="8" height="4" fill="currentColor"/></svg><i class="car"></i></span>
<span class="sb w25 m3"><svg class="ic" viewBox="0 0 16 16"><rect x="2" y="1.500" width="9" height="11" fill="currentColor"/><path d="M12 4v10H4M13 10l2 2-2 2"/></svg></span>
<span class="sb w24 m3"><svg class="ic"><use href="#curve"/></svg></span>
<svg class="sexp" viewBox="0 0 16 16"><path d="M2 14L14 2M2 8v6h6M8 2h6v6"/></svg>
<span class="smsg">按鼠标左键指定第一个角点，或拾取构件图元</span>
<span class="sdot warn">!</span><span class="swarn">合法性检查存在问题，请点击查看</span>
<span class="sdot okk">✓</span><span class="sok">实时计算已完成</span>
</footer>

<div class="taskbar">
<span class="orb"><svg viewBox="0 0 36 36"><circle cx="18" cy="18" r="17" fill="#1d5f94" stroke="#b8d4e6" stroke-width="1.500"/><ellipse cx="18" cy="11" rx="14" ry="9" fill="#8fcbe9" opacity=".55"/><path fill="#e8502a" d="M9 12l8-1v7l-8 1z"/><path fill="#6cb82c" d="M19 11l8-2v8l-8 1z"/><path fill="#2f8fd8" d="M9 20l8-1v7l-8-1z"/><path fill="#f4c020" d="M19 19l8-1v8l-8-1z"/></svg></span>
<i class="tgrip"></i>
<span class="tk"><svg viewBox="0 0 32 32" class="tki"><path d="M25 6c-3-3-9-3-13 1-5 5-6 13-2 17 4 3 11 2 13-3 2-4-1-8-5-7-3 0-4 3-2 4" fill="none" stroke="#1d8df0" stroke-width="5" stroke-linecap="round"/></svg></span>
<span class="tk"><svg viewBox="0 0 32 30" class="tki"><path fill="#e8c66a" d="M2 6h12l2 3h14v19H2z"/><path fill="#fbe9a8" d="M4 11h26v17H2z"/><rect x="5" y="3" width="10" height="4" fill="#fff"/><path fill="#7cb8de" d="M8 22h14v6H8z"/><path fill="#fff" d="M11 24h8v4h-8z"/></svg></span>
<span class="tk"><span class="pdf">PDF</span></span>
<span class="tk"><span class="ieb"><b>e</b></span></span>
<span class="tk act"><svg viewBox="0 0 32 32" class="tki tapp"><rect width="32" height="32" rx="5" fill="#2277f0"/><path fill="#fff" d="M5 12L27 6l-1 6-7 2v13l-5-3V14l-9-1z"/></svg></span>
<div class="tray">
 <i class="tgrip"></i>
 <svg class="trk" viewBox="0 0 18 16"><rect x="1" y="6" width="16" height="9" rx="1" fill="#ddd" stroke="#555"/><path stroke="#555" d="M3 9h12M3 12h12M14 5V1"/></svg>
 <span class="trq">?</span>
 <svg class="trk" viewBox="0 0 18 16"><path fill="none" stroke="#fff" d="M5 1h8v5H5zM3 3h8v5H3z"/><path fill="#fff" d="M6 12h6l-3 4z"/></svg>
 <span class="trg">G</span>
 <span class="trb ie">e</span>
 <span class="trb or">∞</span>
 <span class="trb ho">⌂</span>
 <svg class="trk" viewBox="0 0 18 18"><rect x="5" y="1" width="7" height="12" fill="#999"/><circle cx="12" cy="12" r="5" fill="#5cb82c"/><path stroke="#fff" fill="none" d="M9.500 12l2 2 3-4"/></svg>
 <span class="trb ye">✚</span>
 <svg class="trk" viewBox="0 0 18 18"><path fill="#eee" d="M2 7h4l5-5v14l-5-5H2z"/><path stroke="#e04020" fill="none" d="M13 5c2 2 2 6 0 8"/></svg>
 <svg class="trk" viewBox="0 0 18 18"><path fill="#fff" d="M2 14h2v2H2zM6 11h2v5H6zM10 8h2v8h-2zM14 3h2v13h-2z"/></svg>
 <svg class="trk" viewBox="0 0 18 18"><path fill="#eee" d="M2 7h3l4-5v14l-4-5H2z"/><path stroke="#fff" fill="none" d="M11 6c1 2 1 4 0 6M13 4c2 3 2 7 0 10"/></svg>
</div>
<div class="clock"><span>10:53 周二</span><span>2024/6/4</span></div>
<span class="showd">▸</span>
<span class="peek"></span>
</div>
</div>

<div class="dialog">
 <div class="dtitle"><span>生成砌体加筋</span><svg class="dx" viewBox="0 0 12 12"><use href="#xmark"/></svg></div>
 <div class="dcols">
  <div class="dleft">
   <div class="dl">加筋设置：</div>
   <div class="gridbox">
    <div class="gh"><span class="a">设置条件</span><span class="b">加筋形式</span></div>
    <div class="gr"><span class="a">L型遇框架柱、砼墙</span><span class="b">L-5形</span></div>
    <div class="gr"><span class="a">L型遇构造柱</span><span class="b">L-5形</span></div>
    <div class="gr"><span class="a">T型遇框架柱、砼墙</span><span class="b">T-4形</span></div>
    <div class="gr"><span class="a">T型遇构造柱</span><span class="b">T-4形</span></div>
    <div class="gr"><span class="a">十字型遇框架柱、砼墙</span><span class="b">十字-4形</span></div>
    <div class="gr"><span class="a">十字型遇构造柱</span><span class="b">十字-4形</span></div>
    <div class="gr"><span class="a">一字型遇框架柱、砼墙</span><span class="b">一字-5形</span></div>
    <div class="gr"><span class="a">一字型遇构造柱</span><span class="b">一字-5形</span></div>
    <div class="gr"><span class="a">孤墙端部遇柱、砼墙</span><span class="b sel">一字-6形</span></div>
   </div>
  </div>
  <div class="dright">
   <div class="dl">节点类型选择：</div>
   <div class="cardbox">
    <div class="cards">
     <div class="card"><svg viewBox="0 0 140 140" class="cardsvg"><rect width="140" height="140" fill="#008080"/><use href="#node" width="140" height="140"/><text class="cb-t" x="69" y="97">预留钢筋</text><text class="cb-t s" x="69" y="117">一字-4形</text></svg></div>
     <div class="card cur"><svg viewBox="0 0 140 140" class="cardsvg"><rect width="140" height="140" fill="#008080"/><use href="#node" x="0" y="2" width="140" height="140"/><text class="cb-t" x="69" y="100">植筋</text><text class="cb-t s" x="72" y="121">一字-6形</text></svg></div>
    </div>
   </div>
  </div>
 </div>
 <div class="dl dl2">当前节点示意图：</div>
 <div class="preview"><svg viewBox="0 0 702 206" width="702" height="206">
  <path fill="none" stroke="#fff" d="M279.500 16v11M387.500 11v16M280 20.500h33M359 20.500h28M263.500 32v70M264 42.500h123M264 90.500h123M387.500 33.500h62.500v63h-62.500zM291.500 52v51M263 62l-9 4 9 3 4 3-4 2"/>
  <path fill="none" stroke="#00ffff" stroke-width="2" d="M413 52H280v30h133"/>
  <text class="p1000" x="336" y="28" textLength="40" lengthAdjust="spacingAndGlyphs">1000</text>
  <text class="pa6" x="285" y="119" textLength="60" lengthAdjust="spacingAndGlyphs">A6@500</text>
  <text class="pz" x="347" y="160">植筋</text>
  <text class="py" x="341" y="192">一字-6形</text>
 </svg></div>
 <div class="legend"><span>生成方式</span><i></i></div>
 <div class="radios"><label class="rd on">选择图元</label><label class="rd">选择楼层</label></div>
 <div class="chkrow"><i class="cb big"></i>覆盖同位置砌体加筋</div>
 <div class="dfoot">
  <span class="note">注：加筋形式为空时不生成砌体加筋</span>
  <span class="btn pri">确定</span><span class="btn">取消</span>
 </div>
</div>
</body>
</html>
```
FILE: styles.css
```css
*{box-sizing:border-box}
html,body{margin:0;padding:0;width:1920px;height:1080px;overflow:hidden}
body{position:relative;font:12px/16px "Noto Sans CJK SC","Noto Sans",sans-serif;color:#444;background:#fff}
.defs{position:absolute}
i{font-style:normal}
b{font-weight:400}
.app{display:flex;flex-direction:column;width:1920px;height:1080px}
.ic{width:16px;height:16px;fill:none;stroke:currentColor;stroke-width:1;flex:none}
.car{display:inline-block;width:0;height:0;border:3px solid transparent;border-top:4px solid #666;border-bottom:0;margin-left:3px;vertical-align:middle;flex:none}

/* title bar */
.titlebar{height:26px;display:flex;align-items:center;flex:none}
.tlogo{width:18px;height:18px;margin:0 13px 0 3px;flex:none}
.ti{width:34px;display:flex;align-items:center;justify-content:center;color:#555;flex:none}
.ti.blue{color:#2f80e0}
.ti.off{color:#b9b9b9}
.ti .car{margin-left:3px;border-top-color:#aaa}
.menu-more{width:20px;margin-left:-2px}
.more{display:block;width:7px;height:7px;border-top:1px solid #555;border-bottom:4px solid #555;clip-path:polygon(0 0,100% 0,100% 30%,50% 100%,0 30%)}
.wintitle{margin-left:141px;color:#333;white-space:nowrap}
.winbtns{margin-left:auto;display:flex;align-items:center;padding-right:14px}
.wmin{width:6px;height:2px;background:#555;margin:2px 30px 0 0}
.wr{width:10px;height:12px;fill:none;stroke:#555;margin-right:24px}
.wx{width:11px;height:11px;fill:none;stroke:#555;stroke-width:1.200}

/* menu */
.menubar{height:29px;display:flex;align-items:center;padding:8px 0 0 23px;border-bottom:1px solid #e6e6e6;flex:none;font-size:13px;color:#444}
.mi{position:relative;margin-right:26px;line-height:20px;white-space:nowrap}
.mi:first-child{margin-right:24px}
.mi.on{color:#2f80e0}
.mi.on::after{content:"";position:absolute;left:-3px;right:-3px;bottom:0;height:2px;background:#2f80e0}
.msearch{margin-left:auto;width:319px;height:17px;border:1px solid #ddd;border-radius:2px;display:flex;align-items:center;justify-content:space-between;padding:0 6px 0 3px;color:#999;font-size:12px;margin-right:6px}
.sm{width:11px;height:11px;fill:none;stroke:#aaa;stroke-width:1.200;flex:none}
.avatar{width:15px;height:18px;flex:none}
.uname{margin-left:1px;font-size:12px;width:25px}
.hi{width:16px;height:16px;fill:none;stroke:#555;flex:none}
.hs{margin-left:10px}
.hc{margin-left:16px}
.hq{margin-left:9px;width:16px;font-size:14px;display:flex;align-items:center;color:#555}
.hq .car{margin-left:2px;border-width:2px;border-top-width:3px}
.ht{margin-left:10px}
.hu{margin-left:8px;margin-right:5px}

/* ribbon */
.ribbon{height:101px;display:flex;flex:none;color:#444}
.grp{display:flex;flex-direction:column;position:relative;height:97px;border-right:1px solid #e3e3e3;margin-top:2px}
.gb{display:flex;flex:1;padding-top:2px}
.gl{height:22px;line-height:18px;text-align:center;white-space:nowrap}
.gl1{padding-left:6px}
.gl2{padding-right:10px}
.g1{width:232px}.g2{width:203px;padding-left:10px}.g3{width:276px;padding-left:11px}.g4{width:238px;padding-left:12px}.g5{width:69px;padding-left:7px}.g6{width:126px;padding:4px 0 0 6px}
.g6{border-right:1px solid #e3e3e3}
.bigsel{width:55px;display:flex;flex-direction:column;align-items:center;padding-left:2px;flex:none}
.bigarrow{width:24px;height:32px;margin-top:3px}
.bigsel span{margin-top:8px}
.col{display:flex;flex-direction:column}
.w98{width:98px}.w79{width:79px}.w66{width:66px}.w117{width:117px}.w53{width:53px}.w54{width:54px}.w63{width:63px}.w33{width:33px}
.it{height:24px;display:flex;align-items:center;gap:3px;white-space:nowrap}
.it.off,.off{color:#bdbdbd}
.it.off .car{border-top-color:#bbb}
.genbtn{width:80px;height:70px;background:#c1d7ef;border-radius:3px;display:flex;flex-direction:column;align-items:center;padding-top:1px}
.genic{width:32px;height:32px;margin-bottom:7px}

/* drop bar */
.dropbar{height:32px;background:#f0f0f0;border-top:1px solid #ddd;border-bottom:1px solid #ddd;display:flex;flex:none}
.dd{width:100px;border-right:1px solid #ddd;display:flex;align-items:center;padding:0 6px 0 3px;justify-content:space-between;color:#444}
.dd:empty{border:0}
.dd .car{margin-left:auto}

/* main */
.main{height:821px;display:flex;flex:none;background:#fff}
.phead{height:29px;background:#ededf0;display:flex;align-items:center;position:relative;flex:none}
.grip{width:7px;height:16px;margin:0 8px 0 7px;background-image:radial-gradient(circle,#888 1.100px,transparent 1.300px);background-size:3.500px 5px;flex:none}
.ptitle{margin-left:3px}
.ptitle.rt{margin-left:11px}
.pclose{width:10px;height:10px;fill:none;stroke:#aaa;stroke-width:1.300;position:absolute;right:11px;top:10px}
.nav{width:212px;border-right:1px solid #ddd;border-left:1px solid #ddd;display:flex;flex-direction:column;flex:none}
.navbody{position:relative;flex:1;overflow:hidden}
.navlist{width:198px}
.nb{height:42px;background:#f5f7fa;display:flex;align-items:center;padding-left:11px;gap:13px}
.nb.cur{background:#ebecf0;color:#3f86ea}
.ni{width:26px;height:26px;flex:none}
.ns{height:28px;line-height:28px;padding-left:21px}
.ns.act{color:#3f86ea}
.navscroll{position:absolute;left:203px;top:10px;width:4px;height:410px;background:#e9e9e9;border-radius:2px}
.badge{position:absolute;left:144px;top:635px;width:54px;height:19px;line-height:19px;background:#f0c888;color:#7a4a10;border-radius:10px 0 0 10px;text-align:center;font-size:12px}
.midcol{width:280px;margin-left:5px;display:flex;flex-direction:column;gap:5px;flex:none}
.pane{border:1px solid #ddd;border-top:0}
.pa{height:410px}
.pb{height:405px}
.ptab{height:29px;line-height:29px;padding:0 10px;width:68px;text-align:center;flex:none;white-space:nowrap}
.ptab+.ptab{margin-left:2px}
.ptab.on{background:#fff;color:#2f80e0}
.pane .grip{margin-right:7px;margin-left:8px}
.tools{display:flex;padding:7px 0 0 9px;height:36px}
.tb{height:26px;width:32px;background:#f2f3f5;border-radius:3px;display:flex;align-items:center;justify-content:center;color:#666}
.tb1{border-radius:3px 0 0 3px}
.tbc{width:13px;margin-left:1px;border-radius:0 3px 3px 0}
.tbc .car{margin:0}
.mg9{margin-left:9px;color:#666}
.mg9.off{color:#bbb}
.tbr{width:26px;margin-left:23px;border:1px solid #e2e2e2;font-size:9px;letter-spacing:-1px}
.psearch{margin:4px 10px 0 8px;height:26px;background:#f3f3f4;border-radius:13px;display:flex;align-items:center;justify-content:space-between;padding:0 13px;color:#888}
.ptable{display:flex;height:24px;background:#eeeeee;border-top:1px solid #fff;border-bottom:1px solid #ddd;line-height:22px;text-align:center}
.ptable span{border-right:1px solid #ddd}
.c1{width:101px}.c2{width:135px}.c3{flex:1;border-right:0!important}

/* canvas */
.canvas{width:1137px;height:821px;background:#000;margin-left:3px;position:relative;flex:none;overflow:hidden}
.cad{display:block;width:1137px;height:821px}
.red path{fill:none;stroke:#e00000;stroke-width:1}
.vred path,path.vred{fill:none;stroke:#a00808;stroke-width:1.500}
.lnr{fill:none;stroke:#e00000;stroke-width:1}
.dimr path{fill:none;stroke:#8a0808;stroke-width:1}
.grn path{fill:none;stroke:#0a6a0a;stroke-width:1}
.bub{fill:none;stroke:#0a7a0a}
.bt text{fill:#fff;font:19px "Liberation Sans",sans-serif;text-anchor:middle}
.hint text{fill:#3c3c3c;font:12px "Noto Sans CJK SC",sans-serif}
.ax{font:18px "Liberation Sans",sans-serif;text-anchor:middle}
.handle{position:absolute;top:379px;width:16px;height:63px;background:#444;color:#888;display:flex;align-items:center;justify-content:center;font-size:16px}
.hl{left:0;clip-path:polygon(0 0,100% 10%,100% 92%,0 100%)}
.hr{right:0;clip-path:polygon(0 0,100% 10%,100% 92%,0 100%);transform:scaleX(-1)}
.hr span{transform:scaleX(-1)}
.vstrip{position:absolute;left:1103px;top:0;width:33px;height:245px;background:#fff;border-radius:2px;display:flex;flex-direction:column;align-items:center;padding-top:13px;gap:5px}
.vi{width:22px;height:24px;fill:none;stroke:#555;flex:none}
.v3d{font:bold 7px "Liberation Sans",sans-serif;fill:#2f80e0;stroke:none}
.vcar{width:0;height:0;border:4px solid transparent;border-top:5px solid #555;border-bottom:0;margin:-1px 0}
.vsep{width:24px;height:1px;background:#666;margin:2px 0}

/* right */
.right{width:279px;margin-left:4px;border:1px solid #ddd;border-top:0;border-right:0;display:flex;flex-direction:column;flex:none}
.rtabs{height:26px;display:flex;align-items:flex-end;padding-left:2px;border-bottom:1px solid #ddd;gap:3px;flex:none}
.rtab{height:22px;line-height:22px;width:60px;text-align:center;background:#ddd;color:#666;border-radius:3px 3px 0 0;white-space:nowrap}
.rtab.on{height:25px;line-height:25px;width:61px;background:#fff;color:#3f86ea;border:1px solid #ccc;border-bottom:0;margin-bottom:-1px}
.tree{position:relative;height:721px;margin:4px 0 0 2px;border:1px solid #ddd;border-bottom:0;overflow:hidden;width:275px;flex:none}
.tr{display:grid;grid-template-columns:133px 63px 63px;width:259px;height:21px;border-bottom:1px solid #ddd;line-height:20px}
.tr.th{height:20px;text-align:center}
.tr>span{border-right:1px solid #ddd;white-space:nowrap;overflow:hidden}
.n{position:relative;display:flex;align-items:center;height:20px}
.l0{padding-left:3px}
.l1{padding-left:12px}
.l2{padding-left:41px}
.l2::before{content:"";position:absolute;left:20px;width:16px;height:1px;top:10px;background:#e2e2e2}
.l2::after{content:"";position:absolute;left:18px;top:0;height:21px;width:1px;background:#eee}
.tg{width:13px;height:14px;border:1px solid #999;border-radius:2px;margin-right:6px;position:relative;flex:none}
.tg::after{content:"";position:absolute;left:3px;top:5px;width:5px;height:1px;background:#555}
.k{display:flex;align-items:center;justify-content:center}
.cb{display:block;width:14px;height:14px;border:1px solid #999;border-radius:2px;position:relative;background:#fff;flex:none}
.cb.part::after{content:"";position:absolute;inset:1px;background:#88bdf8;border:0}
.cb.part{border-color:#5a8ab8}
.cb.on{background:#2f80e0;border-color:#2f80e0}
.cb.on::after{content:"";position:absolute;left:3.500px;top:1px;width:4px;height:8px;border:solid #fff;border-width:0 2px 2px 0;transform:rotate(40deg)}
.cb.dis{background:#eeeeee;border-color:#c8c8c8}
.treescroll{position:absolute;right:5px;top:12px;width:4px;height:156px;background:#eaeaea;border-radius:2px}
.rfoot{flex:1;display:flex;justify-content:flex-end;padding:8px 9px 0 0}
.resetbtn{width:89px;height:25px;line-height:23px;border:1px solid #ccc;border-radius:3px;text-align:center;color:#444}

/* status */
.status{height:31px;background:#fcfcfc;display:flex;align-items:center;flex:none;white-space:nowrap;color:#444}
.s1{margin-left:2px;width:90px}.s2{width:140px}.s3{width:110px}.s4{width:110px}
.sb{height:24px;border:1px solid #aaa;border-radius:3px;display:flex;align-items:center;justify-content:center;color:#555;flex:none}
.sb.sel{background:#dbe9fb;border-color:#5a9be8}
.sb .car{margin-left:3px}
.w26{width:26px}.w36{width:36px;margin-left:2px}.w24{width:24px}.w25{width:25px}
.m6{margin-left:6px}.m7{margin-left:7px}.m3{margin-left:3px}
.sexp{width:18px;height:18px;fill:none;stroke:#555;margin-left:17px;flex:none}
.smsg{margin-left:1px}
.sdot{width:14px;height:14px;border-radius:50%;color:#fff;text-align:center;line-height:14px;font-size:11px;font-weight:700;flex:none}
.warn{background:#f59a2e;margin-left:auto}
.swarn{margin-left:6px}
.okk{background:#6cbb10;margin-left:13px}
.sok{margin-left:6px;margin-right:10px}

/* taskbar */
.taskbar{height:40px;flex:1;display:flex;align-items:center;border-top:2px solid #2c4a66;background:linear-gradient(100deg,#2f7fb2 0,#4a9dcf 18%,#52a3d3 35%,#3b8dc8 55%,#2a79bb 63%,#1d60a4 80%,#174f92 100%);position:relative;color:#fff}
.orb{width:40px;height:38px;margin-left:7px;display:flex;align-items:center;justify-content:center;flex:none}
.orb svg{width:36px;height:36px}
.tgrip{width:8px;height:28px;margin:0 10px 0 11px;background-image:radial-gradient(circle,#1b3b5a 1px,transparent 1.200px);background-size:4px 4px;flex:none}
.tk{width:58px;height:38px;margin-right:4px;border:1px solid rgba(255,255,255,.55);border-radius:2px;background:linear-gradient(180deg,rgba(255,255,255,.3),rgba(255,255,255,.1));display:flex;align-items:center;justify-content:center;flex:none}
.tk.act{background:linear-gradient(180deg,rgba(255,255,255,.85),rgba(255,255,255,.4))}
.tki{width:32px;height:30px}
.tapp{width:32px;height:32px}
.pdf{width:32px;height:32px;background:#c3600f;border:2px solid #8a7a6a;border-radius:4px;color:#f5d9b8;font:bold 11px/28px "Liberation Sans",sans-serif;text-align:center}
.ieb{width:32px;height:32px;border-radius:50%;background:#fff;border:2px solid #5cc01c;font:bold 30px/24px "Liberation Sans",sans-serif;color:#5cc01c;text-align:center}
.ieb b{font-weight:700}
.tray{margin-left:auto;display:flex;align-items:center;gap:6px;margin-right:8px}
.tray .tgrip{margin:0 2px 0 0}
.trk{width:18px;height:18px;flex:none}
.trq{width:16px;height:16px;border-radius:50%;background:#1a1a9a;border:1px solid #ddd;text-align:center;line-height:14px;font-weight:700;font-size:11px;flex:none}
.trg{width:18px;font:bold 18px/18px "Liberation Sans",sans-serif;color:#2a9af0;text-align:center;flex:none}
.trb{width:18px;height:18px;border-radius:3px;text-align:center;line-height:18px;font-size:12px;font-weight:700;flex:none}
.ie{background:#fff;color:#44b020;border-radius:50%}
.or{background:#f8a010}
.ho{background:#fff;color:#2070d0}
.ye{background:#e8d010;color:#208020;border-radius:50%}
.clock{display:flex;flex-direction:column;align-items:center;width:74px;font-size:12px;line-height:17px;flex:none}
.showd{width:13px;height:13px;margin-left:14px;background:#fff;color:#111;font-size:9px;line-height:13px;text-align:center;flex:none}
.peek{width:13px;height:38px;margin-left:14px;border:1px solid rgba(255,255,255,.4);background:rgba(255,255,255,.15);flex:none}

/* dialog */
.dialog{position:absolute;left:589px;top:133px;width:726px;height:756px;background:#fff;padding:0 12px;box-shadow:0 0 12px 3px rgba(0,0,0,.75);display:flex;flex-direction:column;color:#444}
.dtitle{height:40px;display:flex;align-items:center;justify-content:space-between;font-size:14px;flex:none;padding-bottom:2px}
.dx{width:11px;height:11px;fill:none;stroke:#666;margin-right:2px}
.dcols{display:flex;gap:6px;flex:none}
.dleft{width:213px}
.dright{width:483px}
.dl{height:24px;line-height:18px}
.gridbox,.cardbox{height:306px;border:1px solid #ccc}
.gh,.gr{display:grid;grid-template-columns:131px 1fr;height:21px;line-height:20px;border-bottom:1px solid #ddd;white-space:nowrap}
.gh{height:20px;text-align:center}
.gh .a{background:#eeeeee}
.gh .b{background:#7eb8f7;color:#fff}
.gr .a{background:#fffde8;padding-left:3px;border-right:1px solid #ddd;border-left:1px solid #ddd}
.gr .b{padding-left:3px}
.gr .b.sel{border:2px solid #777;line-height:17px;padding-left:2px;height:21px}
.cards{display:flex;border-bottom:1px solid #ddd;width:305px;height:152px}
.card{width:153px;padding:5px 6px;flex:none}
.card.cur{width:152px;border:2px solid #0e96ff;outline:2px solid #9cc4f2;outline-offset:-4px;padding:3px 4px}
.cardsvg{display:block;width:140px;height:140px}
.ls{fill:#f00;font:11px "Liberation Serif",serif;text-anchor:middle}
.b1{fill:#fff;font:10px "Liberation Serif",serif;text-anchor:middle}
.no{fill:#fff;font:10px "Liberation Sans",sans-serif;text-anchor:middle}
.cb-t{fill:#fff;font:300 16px "Noto Sans CJK SC",sans-serif;text-anchor:middle;letter-spacing:1px}
.cb-t.s{font-size:16px;letter-spacing:0}
.dl2{margin-top:16px;height:28px;line-height:20px}
.preview{height:206px;background:#000;flex:none}
.preview svg{display:block}
.p1000{fill:#e00000;font:19px "Liberation Sans",sans-serif;text-anchor:middle}
.pa6{fill:#00d000;font:17px "Liberation Sans",sans-serif}
.pz{fill:#fff;font:300 28px "Noto Sans CJK SC",sans-serif;text-anchor:middle}
.py{fill:#fff;font:300 27px "Noto Sans CJK SC",sans-serif;text-anchor:middle;letter-spacing:3px}
.legend{display:flex;align-items:center;gap:6px;margin-top:10px;height:20px;flex:none}
.legend i{flex:1;height:1px;background:#ccc}
.radios{display:flex;padding-left:21px;height:20px;margin-top:2px;align-items:center;flex:none}
.rd{display:flex;align-items:center;width:138px}
.rd::before{content:"";width:14px;height:14px;border:1px solid #999;border-radius:50%;margin-right:3px;flex:none;background:#fff}
.rd.on::before{background:radial-gradient(circle,#2f80e0 0 3.500px,#fff 4px)}
.chkrow{display:flex;align-items:center;padding-left:21px;height:20px;margin-top:3px;gap:3px;flex:none}
.cb.big{height:14px;width:14px}
.dfoot{display:flex;align-items:flex-start;margin-top:11px;border-top:1px solid #ccc;padding-top:12px;flex:none}
.note{margin-right:auto;margin-top:-2px;line-height:20px}
.btn{width:80px;height:26px;border:1px solid #ddd;border-radius:3px;text-align:center;line-height:24px;margin-left:6px}
.btn.pri{background:#2f80e0;border-color:#2f80e0;color:#fff}
```
